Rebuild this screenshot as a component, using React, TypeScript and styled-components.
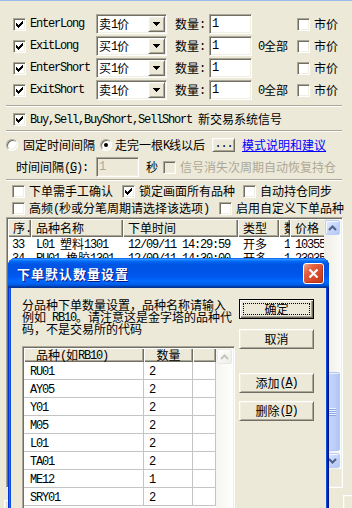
import styled, { createGlobalStyle, css } from 'styled-components';

const FACE = '#ECE9D8';
const SHADOW = '#ACA899';
const DARK = '#716F64';
const LIGHT = '#F1EFE2';
const GRID = '#C4C4C4';

const GlobalStyle = createGlobalStyle`
  * { box-sizing: border-box; }
  html, body { margin: 0; padding: 0; background: ${FACE}; }
  body {
    font-family: "Noto Sans CJK SC", "Liberation Sans", sans-serif;
    font-size: 12px;
    line-height: 12px;
    color: #000;
    overflow: hidden;
  }
`;

const sunken = css`
  border: 1px solid;
  border-color: ${SHADOW} #fff #fff ${SHADOW};
  box-shadow: inset 1px 1px 0 ${DARK}, inset -1px -1px 0 ${LIGHT};
`;

const raised = css`
  border: 1px solid;
  border-color: #fff ${DARK} ${DARK} #fff;
  box-shadow: inset 1px 1px 0 ${LIGHT}, inset -1px -1px 0 ${SHADOW};
  background: ${FACE};
`;

const signals = [
  { name: 'EnterLong', side: '卖', all: false },
  { name: 'ExitLong', side: '买', all: true },
  { name: 'EnterShort', side: '买', all: false },
  { name: 'ExitShort', side: '卖', all: true },
];

const orderCols = [
  { label: '序.', w: 23 },
  { label: '品种名称', w: 92 },
  { label: '下单时间', w: 115 },
  { label: '类型', w: 41 },
  { label: '数量', w: 11 },
  { label: '价格', w: 60 },
];

const orders = [
  ['33', 'L01 塑料1301', '12/09/11 14:29:59', '开多', '1', '10355'],
  ['34', 'RU01 橡胶1301', '12/09/11 14:30:00', '开多', '1', '23035'],
];

const qtyRows = [
  ['RU01', '2'],
  ['AY05', '2'],
  ['Y01', '2'],
  ['M05', '2'],
  ['L01', '2'],
  ['TA01', '2'],
  ['ME12', '1'],
  ['SRY01', '2'],
];

const hintLines = [
  '分品种下单数量设置，品种名称请输入',
  '例如 RB10。请注意这是金字塔的品种代',
  '码，不是交易所的代码',
];

// ascii runs get the half-width mono face, like SimSun does
function Txt({ s }: { s: string }) {
  const parts = s.split(/([\x20-\x7e]+)/).filter(Boolean);
  return (
    <span>
      {parts.map((p, i) =>
        /^[\x20-\x7e]+$/.test(p) ? <A key={i}>{p}</A> : <span key={i}>{p}</span>
      )}
    </span>
  );
}

const CheckGlyph = () => (
  <svg width="7" height="7" viewBox="0 0 7 7" shapeRendering="crispEdges">
    <path
      fill="currentColor"
      d="M0 2h1v3H0zM1 3h1v3H1zM2 4h1v3H2zM3 3h1v3H3zM4 2h1v3H4zM5 1h1v3H5zM6 0h1v3H6z"
    />
  </svg>
);

const DropArrow = () => (
  <svg width="7" height="4" viewBox="0 0 7 4" shapeRendering="crispEdges">
    <path fill="#000" d="M0 0h7v1H0zM1 1h5v1H1zM2 2h3v1H2zM3 3h1v1H3z" />
  </svg>
);

const Chevron = ({ color, down }: { color: string; down?: boolean }) => (
  <svg width="9" height="6" viewBox="0 0 9 6" style={down ? { transform: 'rotate(180deg)' } : undefined}>
    <polyline points="1,5 4.5,1.5 8,5" fill="none" stroke={color} strokeWidth="2" />
  </svg>
);

const Grip = () => (
  <svg width="7" height="8" viewBox="0 0 7 8" shapeRendering="crispEdges">
    <path fill="#EEF4FE" d="M0 0h7v1H0zM0 2h7v1H0zM0 4h7v1H0zM0 6h7v1H0z" />
    <path fill="#8CA5E2" d="M0 1h7v1H0zM0 3h7v1H0zM0 5h7v1H0zM0 7h7v1H0z" />
  </svg>
);

function Check({ checked, disabled }: { checked?: boolean; disabled?: boolean }) {
  return <CheckBox $disabled={disabled}>{checked && <CheckGlyph />}</CheckBox>;
}

function App() {
  return (
    <>
      <GlobalStyle />
      <Page>
        <Signals>
          {signals.map((s) => (
            <SignalRow key={s.name}>
              <SignalName>
                <Check checked />
                <A>{s.name}</A>
              </SignalName>
              <Combo>
                <ComboText>
                  <Txt s={`${s.side}1价`} />
                </ComboText>
                <ComboButton>
                  <DropArrow />
                </ComboButton>
              </Combo>
              <QtyLabel>
                <Txt s="数量:" />
              </QtyLabel>
              <Edit>
                <A>1</A>
              </Edit>
              <AllLabel>{s.all && <Txt s="0全部" />}</AllLabel>
              <Option>
                <Check />
                <span>市价</span>
              </Option>
            </SignalRow>
          ))}
        </Signals>

        <Etched $mt={5} />
        <BuyRow>
          <Check checked />
          <Txt s="Buy,Sell,BuyShort,SellShort 新交易系统信号" />
        </BuyRow>
        <Etched $mt={2} />

        <RadioRow>
          <Choice $gap={5}>
            <RadioDot />
            <span>固定时间间隔</span>
          </Choice>
          <Choice $gap={3} $ml={5}>
            <RadioDot $on />
            <Txt s="走完一根K线以后" />
          </Choice>
          <MoreButton>
            <A>...</A>
          </MoreButton>
          <HelpLink>模式说明和建议</HelpLink>
        </RadioRow>

        <TimeRow>
          <TimeLabel>
            时间间隔
            <A>
              (<Key>G</Key>):
            </A>
          </TimeLabel>
          <Edit $disabled>
            <A>1</A>
          </Edit>
          <SecLabel>秒</SecLabel>
          <Choice $gap={4} $ml={5}>
            <Check disabled />
            <Grey>信号消失次周期自动恢复持仓</Grey>
          </Choice>
        </TimeRow>
        <Etched $mt={2} />

        <OptionRow>
          <OptionItem $w={110}>
            <Check />
            <span>下单需手工确认</span>
          </OptionItem>
          <OptionItem $w={121}>
            <Check checked />
            <span>锁定画面所有品种</span>
          </OptionItem>
          <OptionItem>
            <Check />
            <span>自动持仓同步</span>
          </OptionItem>
        </OptionRow>
        <OptionRow>
          <OptionItem $w={207}>
            <Check />
            <Txt s="高频(秒或分笔周期请选择该选项)" />
          </OptionItem>
          <OptionItem>
            <Check />
            <span>启用自定义下单品种</span>
          </OptionItem>
        </OptionRow>

        <OrderList>
          <OrderBody>
            <OrderHeader>
              {orderCols.map((c) => (
                <HeaderCell key={c.label} $w={c.w} $pad={5}>
                  <Txt s={c.label} />
                </HeaderCell>
              ))}
            </OrderHeader>
            {orders.map((o) => (
              <OrderRow key={o[0]}>
                {o.map((v, i) => (
                  <OrderCell key={i} $w={orderCols[i].w} $pad={i === 0 ? 4 : 5}>
                    <Txt s={v} />
                  </OrderCell>
                ))}
              </OrderRow>
            ))}
          </OrderBody>
          <VScroll>
            <ScrollButton>
              <Chevron color="#4D6185" />
            </ScrollButton>
            <ScrollTrack />
            <Thumb>
              <Grip />
            </Thumb>
            <ScrollButton>
              <Chevron color="#4D6185" down />
            </ScrollButton>
          </VScroll>
          <HScroll />
          <Corner />
        </OrderList>

        <BottomRow>
          <Stub />
          <span />
          <Stub $w={80} />
        </BottomRow>

        <Dialog>
          <TitleBar>
            <TitleText>下单默认数量设置</TitleText>
            <CloseButton>
              <svg width="11" height="11" viewBox="0 0 11 11">
                <path d="M1.5 1.5L9.5 9.5M9.5 1.5L1.5 9.5" stroke="#fff" strokeWidth="2.2" />
              </svg>
            </CloseButton>
          </TitleBar>
          <Client>
            <LeftColumn>
              <Hint>
                {hintLines.map((l) => (
                  <HintLine key={l}>
                    <Txt s={l} />
                  </HintLine>
                ))}
              </Hint>
              <QtyList>
                <QtyBody>
                  <QtyHeader>
                    <HeaderCell $w={120} $pad={12}>
                      <Txt s="品种(如RB10)" />
                    </HeaderCell>
                    <HeaderCell $w={49} $center>
                      数量
                    </HeaderCell>
                    <HeaderCell $w={23} />
                  </QtyHeader>
                  {qtyRows.map((r) => (
                    <QtyRow key={r[0]}>
                      <QtyCell $w={120} $pad={6}>
                        <A>{r[0]}</A>
                      </QtyCell>
                      <QtyCell $w={49} $pad={5}>
                        <A>{r[1]}</A>
                      </QtyCell>
                      <QtyCell $w={23} />
                    </QtyRow>
                  ))}
                </QtyBody>
                <VScroll $disabled>
                  <ScrollButton $disabled>
                    <Chevron color="#C5C5BB" />
                  </ScrollButton>
                  <ScrollTrack />
                </VScroll>
              </QtyList>
            </LeftColumn>
            <ButtonColumn>
              <PushButton $default>确定</PushButton>
              <PushButton $mt={10}>取消</PushButton>
              <PushButton $mt={24}>
                添加
                <A>
                  (<Key>A</Key>)
                </A>
              </PushButton>
              <PushButton $mt={8}>
                删除
                <A>
                  (<Key>D</Key>)
                </A>
              </PushButton>
            </ButtonColumn>
          </Client>
        </Dialog>
      </Page>
    </>
  );
}

export default App;

const Page = styled.div`
  position: relative;
  width: 352px;
  height: 508px;
  overflow: hidden;
  border-top: 1px solid #9DB8EA;
`;

const A = styled.span`
  font-family: "Liberation Mono", "DejaVu Sans Mono", monospace;
  font-size: 12px;
  line-height: 9px;
  letter-spacing: -1.2px;
  vertical-align: 1px;
`;

const Key = styled.span`
  text-decoration: underline;
`;

const CheckBox = styled.span<{ $disabled?: boolean }>`
  width: 13px;
  height: 13px;
  flex: none;
  display: inline-flex;
  align-items: center;
  justify-content: center;
  ${sunken}
  background: ${(p) => (p.$disabled ? FACE : '#fff')};
  color: #000;
`;

const RadioDot = styled.span<{ $on?: boolean }>`
  width: 12px;
  height: 12px;
  flex: none;
  border-radius: 50%;
  display: inline-flex;
  align-items: center;
  justify-content: center;
  ${sunken}
  background: #fff;
  &::after {
    content: '';
    width: 4px;
    height: 4px;
    border-radius: 50%;
    background: ${(p) => (p.$on ? '#000' : 'transparent')};
  }
`;

const Signals = styled.div`
  display: flex;
  flex-direction: column;
  gap: 2px;
  padding: 13px 0 0 13px;
`;

const SignalRow = styled.div`
  display: flex;
  align-items: center;
  height: 20px;
`;

const SignalName = styled.div`
  display: flex;
  align-items: center;
  gap: 4px;
  width: 83px;
`;

const Combo = styled.div`
  width: 71px;
  height: 20px;
  display: flex;
  align-items: center;
  padding: 1px;
  ${sunken}
  background: #fff;
`;

const ComboText = styled.div`
  flex: 1;
  padding-left: 1px;
`;

const ComboButton = styled.div`
  width: 17px;
  height: 16px;
  display: flex;
  align-items: center;
  justify-content: center;
  ${raised}
`;

const QtyLabel = styled.div`
  width: 34px;
  margin-left: 8px;
`;

const Edit = styled.div<{ $disabled?: boolean }>`
  width: 43px;
  height: 20px;
  display: flex;
  align-items: center;
  padding-left: 2px;
  ${sunken}
  background: ${(p) => (p.$disabled ? FACE : '#fff')};
  color: ${(p) => (p.$disabled ? SHADOW : '#000')};
`;

const AllLabel = styled.div`
  width: 39px;
  margin-left: 6px;
`;

const Option = styled.div`
  display: flex;
  align-items: center;
  gap: 4px;
`;

const Etched = styled.div<{ $mt: number }>`
  height: 2px;
  margin: ${(p) => p.$mt}px 10px 0 6px;
  border-top: 1px solid ${SHADOW};
  border-bottom: 1px solid #fff;
`;

const BuyRow = styled.div`
  height: 18px;
  margin-top: 3px;
  padding-left: 13px;
  display: flex;
  align-items: center;
  gap: 4px;
`;

const RadioRow = styled.div`
  height: 15px;
  margin-top: 5px;
  padding-left: 6px;
  display: flex;
  align-items: center;
`;

const Choice = styled.div<{ $gap: number; $ml?: number }>`
  display: flex;
  align-items: center;
  gap: ${(p) => p.$gap}px;
  margin-left: ${(p) => p.$ml ?? 0}px;
`;

const MoreButton = styled.div`
  width: 23px;
  height: 14px;
  margin-left: 7px;
  display: flex;
  align-items: center;
  justify-content: center;
  ${raised}
`;

const HelpLink = styled.a`
  margin-left: 7px;
  color: #0000ff;
  text-decoration: underline;
`;

const TimeRow = styled.div`
  height: 20px;
  margin-top: 5px;
  padding-left: 16px;
  display: flex;
  align-items: center;
`;

const TimeLabel = styled.div`
  width: 80px;
`;

const SecLabel = styled.div`
  margin-left: 7px;
`;

const Grey = styled.span`
  color: ${SHADOW};
`;

const OptionRow = styled.div`
  height: 14px;
  margin-top: 3px;
  padding-left: 12px;
  display: flex;
  align-items: center;
`;

const OptionItem = styled.div<{ $w?: number }>`
  display: flex;
  align-items: center;
  gap: 4px;
  width: ${(p) => (p.$w ? `${p.$w}px` : 'auto')};
  white-space: nowrap;
`;

const OrderList = styled.div`
  width: 337px;
  height: 271px;
  margin: 2px 0 0 6px;
  padding: 1px;
  ${sunken}
  background: #fff;
  display: grid;
  grid-template-columns: 1fr 17px;
  grid-template-rows: 1fr 17px;
`;

const OrderBody = styled.div`
  overflow: hidden;
  min-width: 0;
`;

const OrderHeader = styled.div`
  display: flex;
  height: 18px;
  white-space: nowrap;
`;

const HeaderCell = styled.div<{ $w: number; $pad?: number; $center?: boolean }>`
  flex: none;
  width: ${(p) => p.$w}px;
  height: 100%;
  overflow: hidden;
  display: flex;
  align-items: center;
  justify-content: ${(p) => (p.$center ? 'center' : 'flex-start')};
  padding-left: ${(p) => p.$pad ?? 0}px;
  white-space: nowrap;
  background: ${FACE};
  box-shadow: inset 1px 1px 0 #fff, inset -1px -1px 0 ${DARK}, inset -2px -2px 0 ${SHADOW};
`;

const OrderRow = styled.div`
  display: flex;
  height: 14px;
  white-space: nowrap;
`;

const OrderCell = styled.div<{ $w: number; $pad: number }>`
  flex: none;
  width: ${(p) => p.$w}px;
  height: 100%;
  display: flex;
  align-items: center;
  padding-left: ${(p) => p.$pad}px;
  overflow: hidden;
`;

const VScroll = styled.div<{ $disabled?: boolean }>`
  display: flex;
  flex-direction: column;
  background: ${(p) =>
    p.$disabled
      ? 'linear-gradient(to right, #F6F5F0, #FEFEFC)'
      : 'linear-gradient(to right, #EEEDE5, #FBFBF8)'};
`;

const ScrollButton = styled.div<{ $disabled?: boolean }>`
  width: 15px;
  height: 15px;
  margin: 1px;
  flex: none;
  border-radius: 2px;
  display: flex;
  align-items: center;
  justify-content: center;
  border: 1px solid ${(p) => (p.$disabled ? '#E8E8E1' : '#BCCEF8')};
  background: ${(p) =>
    p.$disabled
      ? 'linear-gradient(135deg, #FDFDFB, #EEEEE8)'
      : 'linear-gradient(135deg, #E2EBFE 0%, #C6D5FB 50%, #B4C7F6 100%)'};
  box-shadow: inset 1px 1px 0 rgba(255, 255, 255, 0.8);
`;

const ScrollTrack = styled.div`
  flex: 1;
`;

const Thumb = styled.div`
  height: 79px;
  margin: 0 1px 1px;
  flex: none;
  border-radius: 2px;
  display: flex;
  align-items: center;
  justify-content: center;
  border: 1px solid #B5C8F5;
  background: linear-gradient(to right, #CBD9FC, #BDCFF9 60%, #B2C6F6);
  box-shadow: inset 1px 1px 0 rgba(255, 255, 255, 0.7);
`;

const HScroll = styled.div`
  background: linear-gradient(to bottom, #EEEDE5, #FBFBF8);
`;

const Corner = styled.div`
  background: ${FACE};
`;

const BottomRow = styled.div`
  width: 430px;
  margin-top: 7px;
  padding-left: 4px;
  display: grid;
  grid-template-columns: 7px 332px 80px;
  align-items: start;
`;

const Stub = styled.div<{ $w?: number }>`
  height: 20px;
  margin-top: ${(p) => (p.$w ? 0 : 5)}px;
  ${raised}
`;

const Dialog = styled.div`
  position: absolute;
  left: 8px;
  top: 257px;
  width: 321px;
  height: 280px;
  padding: 0 3px;
  display: flex;
  flex-direction: column;
  border-radius: 8px 8px 0 0;
  background: #0855DD;
  box-shadow: inset 1px 0 0 #0831D9, inset -1px 0 0 #00138C, inset 2px 0 0 #166AEE, inset -2px 0 0 #001EA0;
`;

const TitleBar = styled.div`
  height: 30px;
  margin: 0 -3px;
  padding: 0 5px 0 9px;
  display: flex;
  align-items: center;
  justify-content: space-between;
  border-radius: 8px 8px 0 0;
  background: linear-gradient(
    to bottom,
    #0058ee 0%,
    #3593ff 4%,
    #288eff 6%,
    #127dff 8%,
    #036ffc 10%,
    #0262ee 14%,
    #0057e5 20%,
    #0054e3 24%,
    #0055eb 56%,
    #005bf5 66%,
    #026afe 76%,
    #0062ef 86%,
    #0052d6 92%,
    #0040ab 94%,
    #003092 100%
  );
`;

const TitleText = styled.div`
  color: #fff;
  font-size: 13px;
  font-weight: bold;
  letter-spacing: 1px;
  text-shadow: 1px 1px 0 #0a1883;
  padding-top: 1px;
`;

const CloseButton = styled.div`
  width: 21px;
  height: 21px;
  margin-top: 1px;
  display: flex;
  align-items: center;
  justify-content: center;
  border: 1px solid #fff;
  border-radius: 3px;
  background: linear-gradient(135deg, #f2a48c 0%, #e4603f 30%, #d5472a 65%, #c23a1c 100%);
  box-shadow: inset -1px -1px 0 rgba(120, 25, 0, 0.35);
`;

const Client = styled.div`
  flex: 1;
  display: flex;
  padding: 11px 0 0 11px;
  background: ${FACE};
  min-height: 0;
`;

const LeftColumn = styled.div`
  width: 213px;
  display: flex;
  flex-direction: column;
`;

const Hint = styled.div`
  display: flex;
  flex-direction: column;
`;

const HintLine = styled.div`
  height: 12px;
  white-space: nowrap;
`;

const QtyList = styled.div`
  flex: 1;
  margin-top: 11px;
  padding: 1px;
  ${sunken}
  background: #fff;
  display: grid;
  grid-template-columns: 1fr 17px;
  min-height: 0;
  overflow: hidden;
`;

const QtyBody = styled.div`
  overflow: hidden;
`;

const QtyHeader = styled.div`
  display: flex;
  height: 14px;
`;

const QtyRow = styled.div`
  display: flex;
  height: 18px;
  border-bottom: 1px solid ${GRID};
`;

const QtyCell = styled.div<{ $w: number; $pad?: number }>`
  flex: none;
  width: ${(p) => p.$w}px;
  padding: 3px 0 0 ${(p) => p.$pad ?? 0}px;
  display: flex;
  align-items: center;
  border-right: 1px solid ${GRID};
`;

const ButtonColumn = styled.div`
  width: 75px;
  margin-left: 4px;
  display: flex;
  flex-direction: column;
`;

const PushButton = styled.div<{ $default?: boolean; $mt?: number }>`
  width: 75px;
  height: 20px;
  margin-top: ${(p) => p.$mt ?? 0}px;
  display: flex;
  align-items: center;
  justify-content: center;
  ${raised}
  ${(p) =>
    p.$default &&
    css`
      border-color: #000;
      box-shadow: inset 1px 1px 0 #fff, inset -1px -1px 0 ${DARK}, inset -2px -2px 0 ${SHADOW};
      outline: 1px dotted #000;
      outline-offset: -5px;
    `}
`;
